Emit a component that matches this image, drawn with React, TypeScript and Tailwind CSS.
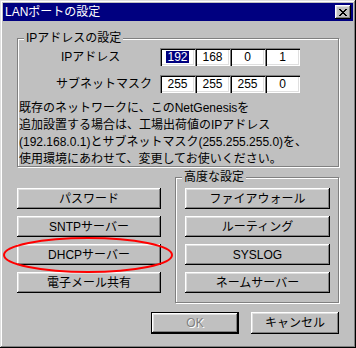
import React from "react";

const font = { fontFamily: '"Liberation Sans", "Noto Sans CJK JP", sans-serif' };

function Btn({ children, className = "" }: { children: React.ReactNode; className?: string }) {
  return (
    <div
      className={
        "flex items-center justify-center bg-[#c0c0c0] text-[12px] text-black shadow-[inset_-1px_-1px_#000,inset_1px_1px_#fff,inset_-2px_-2px_#808080,inset_2px_2px_#dfdfdf] " +
        className
      }
    >
      {children}
    </div>
  );
}

function Field({ v, sel = false }: { v: string; sel?: boolean }) {
  return (
    <div className="flex h-[18px] w-[35px] items-center justify-center bg-white text-[12px] text-black shadow-[inset_1px_1px_#808080,inset_2px_2px_#000,inset_-1px_-1px_#fff,inset_-2px_-2px_#dfdfdf]">
      {sel ? <span className="bg-[#000080] px-[1px] leading-[12px] text-white">{v}</span> : v}
    </div>
  );
}

export default function App() {
  return (
    <div
      className="relative flex h-[348px] w-[356px] flex-col bg-[#c0c0c0] p-[3px] shadow-[inset_-1px_-1px_#000,inset_1px_1px_#dfdfdf,inset_-2px_-2px_#808080,inset_2px_2px_#fff]"
      style={font}
    >
      {/* title bar */}
      <div className="flex h-[18px] items-center justify-between bg-[#000080] pl-[2px] pr-[2px]">
        <span className="text-[12px] leading-[14px] text-white">LANポートの設定</span>
        <div className="flex h-[14px] w-[16px] items-center justify-center bg-[#c0c0c0] shadow-[inset_-1px_-1px_#000,inset_1px_1px_#fff,inset_-2px_-2px_#808080,inset_2px_2px_#dfdfdf]">
          <svg width="8" height="7" viewBox="0 0 8 7" shapeRendering="crispEdges">
            <path
              d="M0 0h2v1H0zM6 0h2v1H6zM1 1h2v1H1zM5 1h2v1H5zM2 2h4v1H2zM3 3h2v1H3zM2 4h4v1H2zM1 5h2v1H1zM5 5h2v1H5zM0 6h2v1H0zM6 6h2v1H6z"
              fill="#000"
            />
          </svg>
        </div>
      </div>

      <div className="flex flex-col px-[14px]">
        {/* IP group */}
        <div className="relative mt-[17px] h-[129px] border border-[#808080] pl-[1px] pt-[9px] shadow-[1px_1px_0_#fff,inset_1px_1px_0_#fff]">
          <span className="absolute -top-[9px] left-[6px] bg-[#c0c0c0] px-[2px] text-[12px] leading-[16px] text-black">
            IPアドレスの設定
          </span>
          <div className="flex flex-col gap-[9px]">
            <div className="flex items-center">
              <div className="w-[141px] pl-[42px] text-[12px] text-black">IPアドレス</div>
              <div className="flex">
                <Field v="192" sel />
                <Field v="168" />
                <Field v="0" />
                <Field v="1" />
              </div>
            </div>
            <div className="flex items-center">
              <div className="w-[141px] pl-[37px] text-[12px] text-black">サブネットマスク</div>
              <div className="flex">
                <Field v="255" />
                <Field v="255" />
                <Field v="255" />
                <Field v="0" />
              </div>
            </div>
          </div>
          <p className="mt-[7px] text-[12px] leading-[17px] text-black">
            既存のネットワークに、このNetGenesisを
            <br />
            追加設置する場合は、工場出荷値のIPアドレス
            <br />
            (192.168.0.1)とサブネットマスク(255.255.255.0)を、
            <br />
            使用環境にあわせて、変更してお使いください。
          </p>
        </div>

        {/* lower section */}
        <div className="mt-[10px] flex items-start justify-between">
          <div className="mt-[11px] flex w-[144px] flex-col gap-[7px]">
            <Btn className="h-[21px]">パスワード</Btn>
            <Btn className="h-[21px]">SNTPサーバー</Btn>
            <Btn className="h-[21px]">DHCPサーバー</Btn>
            <Btn className="h-[21px]">電子メール共有</Btn>
          </div>
          <div className="relative flex h-[126px] w-[164px] flex-col gap-[7px] border border-[#808080] pl-[9px] pr-[8px] pt-[10px] shadow-[1px_1px_0_#fff,inset_1px_1px_0_#fff]">
            <span className="absolute -top-[9px] left-[6px] bg-[#c0c0c0] px-[2px] text-[12px] leading-[16px] text-black">
              高度な設定
            </span>
            <Btn className="h-[21px]">ファイアウォール</Btn>
            <Btn className="h-[21px]">ルーティング</Btn>
            <Btn className="h-[21px]">SYSLOG</Btn>
            <Btn className="h-[21px]">ネームサーバー</Btn>
          </div>
        </div>

        {/* bottom buttons */}
        <div className="mt-[9px] flex justify-end gap-[12px]">
          <div className="flex h-[22px] w-[88px] items-center justify-center bg-[#c0c0c0] text-[12px] text-[#808080] shadow-[inset_0_0_0_1px_#000,inset_-2px_-2px_#000,inset_2px_2px_#fff,inset_-3px_-3px_#808080,inset_3px_3px_#dfdfdf] [text-shadow:1px_1px_0_#fff]">
            OK
          </div>
          <Btn className="h-[22px] w-[88px]">キャンセル</Btn>
        </div>
      </div>

      {/* red annotation ellipse */}
      <svg className="pointer-events-none absolute left-[3px] top-[237px]" width="170" height="36" viewBox="0 0 170 36">
        <ellipse cx="85" cy="18" rx="84" ry="17" fill="none" stroke="#ff0000" strokeWidth="2" />
      </svg>
    </div>
  );
}
